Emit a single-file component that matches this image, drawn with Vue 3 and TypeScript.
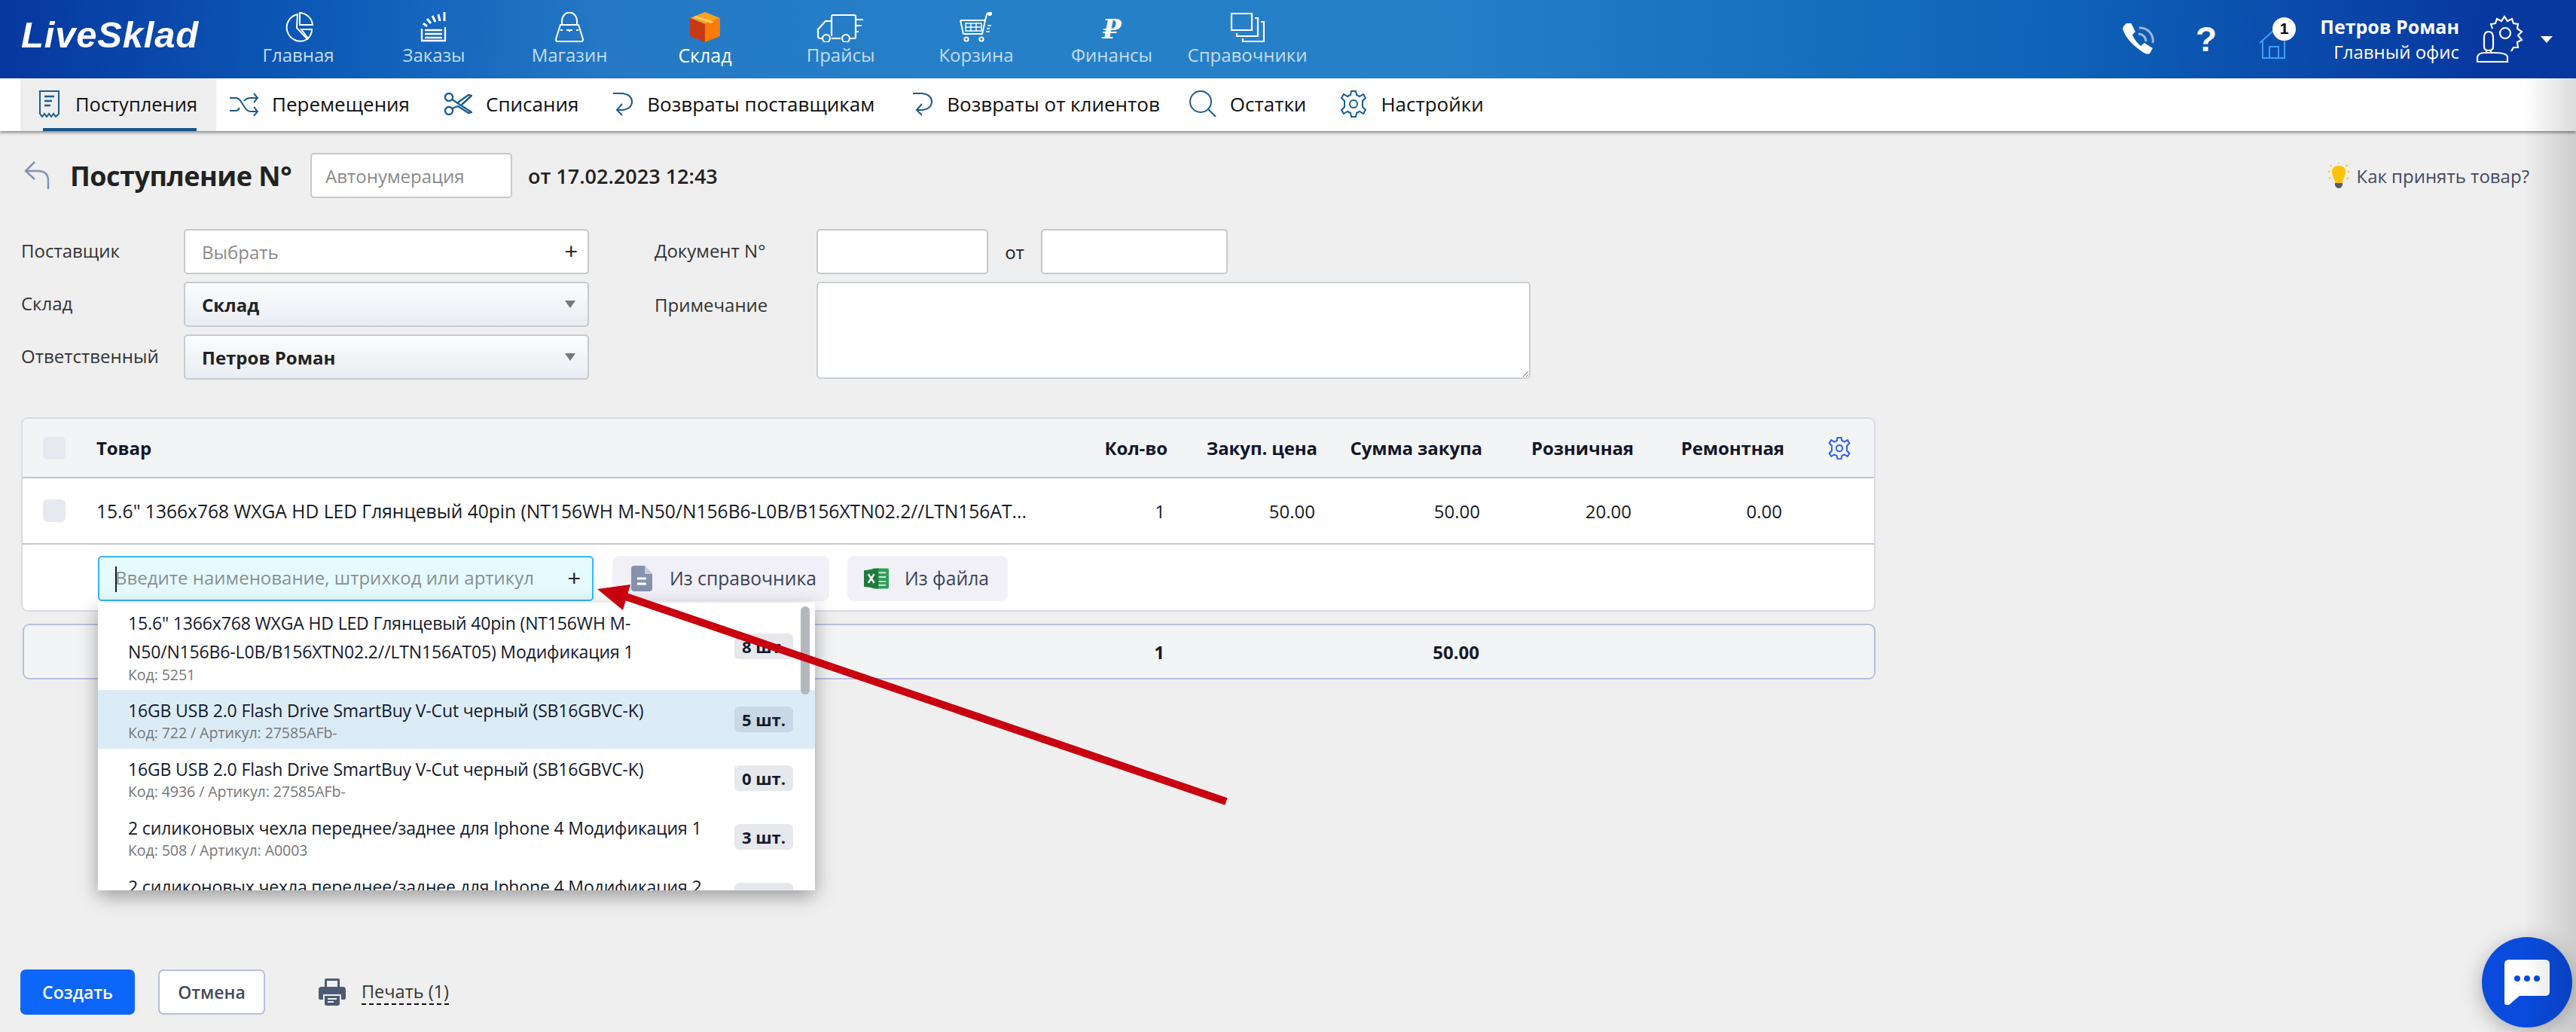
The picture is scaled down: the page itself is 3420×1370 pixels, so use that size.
<script setup lang="ts">
interface Suggestion { lines: string[]; meta: string; stock: string; active?: boolean }

const subnavReturn = ['Возвраты поставщикам', 'Возвраты от клиентов']

const suggestions: Suggestion[] = [
  { lines: ['15.6" 1366x768 WXGA HD LED Глянцевый 40pin (NT156WH M-', 'N50/N156B6-L0B/B156XTN02.2//LTN156AT05) Модификация 1'], meta: 'Код: 5251', stock: '8 шт.' },
  { lines: ['16GB USB 2.0 Flash Drive SmartBuy V-Cut черный (SB16GBVC-K)'], meta: 'Код: 722 / Артикул: 27585AFb-', stock: '5 шт.', active: true },
  { lines: ['16GB USB 2.0 Flash Drive SmartBuy V-Cut черный (SB16GBVC-K)'], meta: 'Код: 4936 / Артикул: 27585AFb-', stock: '0 шт.' },
  { lines: ['2 силиконовых чехла переднее/заднее для Iphone 4 Модификация 1'], meta: 'Код: 508 / Артикул: A0003', stock: '3 шт.' },
  { lines: ['2 силиконовых чехла переднее/заднее для Iphone 4 Модификация 2'], meta: 'Код: 509 / Артикул: A0004', stock: '1 шт.' }
]
</script>

<template>
  <div class="page">
    <header class="topbar">
      <div class="logo">LiveSklad</div>
      <nav class="mainnav">
        <a class="nav-item">
          <svg width="42" height="40" viewBox="0 0 42 40" fill="none" stroke="#fff" stroke-width="2"><path d="M20 3A18 18 0 1 0 33 36L19 21Z"/><path d="M23 1A18 18 0 0 1 40 17H23Z"/><path d="M25 23H39A18 18 0 0 1 34 35Z"/></svg>
          <span>Главная</span>
        </a>
        <a class="nav-item">
          <svg width="36" height="40" viewBox="0 0 36 40" fill="none" stroke="#fff" stroke-width="2.4"><path d="M2 22V38H33V20"/><path d="M6 24H29M6 29H29M6 34H29" stroke-width="2.6"/><path d="M9 19L4 15M14 15L9 9M20 13L16 5M26 12L24 3M32 12V0" stroke-width="3"/></svg>
          <span>Заказы</span>
        </a>
        <a class="nav-item">
          <svg width="40" height="40" viewBox="0 0 40 40" fill="none" stroke="#fff" stroke-width="2"><path d="M10 18V12A9.500 11 0 0 1 30 12V18"/><path d="M8 17H32L38 36Q38 39 36 39H4Q2 39 2 36Z"/><path d="M8 24H11M29 24H32M16 24H24M20 24V26"/></svg>
          <span>Магазин</span>
        </a>
        <a class="nav-item current">
          <svg width="40" height="40" viewBox="0 0 40 40"><path d="M20 0L40 8L20 16L0 8Z" fill="#f5a21e"/><path d="M0 8L20 16V40L0 32Z" fill="#c63a13"/><path d="M40 8L20 16V40L40 32Z" fill="#ff7a05"/><path d="M8 5L32 13L28 15L4 7Z" fill="#ffc95c"/></svg>
          <span>Склад</span>
        </a>
        <a class="nav-item">
          <svg width="64" height="40" viewBox="0 0 64 40" fill="none" stroke="#fff" stroke-width="2.2"><path d="M20 12H12L2 23V32Q2 35 5 35H8"/><path d="M20 32V6Q20 4 22 4H50Q52 4 52 6V33Q52 35 50 35H44"/><path d="M20 35H32"/><circle cx="13" cy="35" r="5"/><circle cx="39" cy="35" r="5"/><path d="M52 10H62M52 18H60M52 26H56"/></svg>
          <span>Прайсы</span>
        </a>
        <a class="nav-item">
          <svg width="44" height="40" viewBox="0 0 44 40" fill="none" stroke="#fff" stroke-width="2"><path d="M1 11H34L36 3Q37 1 40 1"/><path d="M1 11L5 29H30L34 11"/><path d="M8 15H29V25H8ZM15 14V26M22 14V26M8 20H29" stroke-width="1.400"/><circle cx="9" cy="36" r="2.600"/><circle cx="29" cy="36" r="2.600"/><circle cx="40" cy="2" r="2" fill="#fff"/><path d="M37 18H42M36 22H40M35 26H40" stroke-width="1.400"/></svg>
          <span>Корзина</span>
        </a>
        <a class="nav-item">
          <span class="ruble">₽</span>
          <span>Финансы</span>
        </a>
        <a class="nav-item">
          <svg width="46" height="40" viewBox="0 0 46 40" fill="none" stroke="#fff" stroke-width="2.2"><path d="M2 2H29V24H2Z"/><path d="M33 8H37V32H9V28"/><path d="M41 13H45V39H17V35"/></svg>
          <span>Справочники</span>
        </a>
      </nav>
      <div class="top-actions">
        <svg class="phone" width="42" height="42" viewBox="0 0 42 42" fill="none"><path d="M5 1L11 0L17 12L13 16Q16 24 24 31L29 27L40 34L36 41Q33 43 28 40Q5 25 0 8Q1 4 5 1Z" fill="#fff" transform="translate(0 -1)"/><path d="M22 6A17 17 0 0 1 40 26M21 14A10 10 0 0 1 31 24" stroke="#9db8dc" stroke-width="3"/></svg>
        <div class="question">?</div>
        <div class="home">
          <svg width="36" height="38" viewBox="0 0 36 38" fill="none" stroke="#3c9fff" stroke-width="2"><path d="M1 17L19 1M5 14V37H34V6"/><path d="M14 37V22H26V37"/></svg>
          <span class="home-badge">1</span>
        </div>
        <div class="user">
          <div class="user-name">Петров Роман</div>
          <div class="user-office">Главный офис</div>
        </div>
        <svg class="avatar" width="64" height="64" viewBox="0 0 64 64" fill="none" stroke="#fff" stroke-width="2.200"><path d="M22 18L20 12L26 11L28 5L34 8L38 2L42 8L48 5L50 11L56 12L55 18L61 22L56 27L61 33L55 36L56 43L50 43L47 48"/><circle cx="39" cy="24" r="7"/><path d="M11 30Q11 22 17 22Q23 22 23 30V42Q23 47 17 47Q11 47 11 42Z"/><path d="M14 47V50H20V47"/><path d="M2 62V56Q3 50 12 50H24Q42 50 42 56V62Z"/></svg>
        <span class="caret"></span>
      </div>
    </header>

    <nav class="subnav">
      <a class="sub-item active">
        <svg width="29" height="36" viewBox="0 0 29 36" fill="none" stroke="#1b5c8f" stroke-width="2"><path d="M2 1H27V31L23 35L20 31L17 35L14 31L11 35L8 31L5 35L2 31Z"/><path d="M8 8H21M8 14H18M8 20H16" stroke-width="2.500"/></svg>
        <span>Поступления</span>
      </a>
      <a class="sub-item">
        <svg width="38" height="32" viewBox="0 0 38 32" fill="none" stroke="#1b5c8f" stroke-width="2"><path d="M0 8H8Q12 8 15 13L21 22Q24 26 28 26H37M0 25H8Q11 25 13 21M19 12Q22 8 28 8H37"/><path d="M32 2L37 8L32 14M32 20L37 26L32 32"/></svg>
        <span>Перемещения</span>
      </a>
      <a class="sub-item">
        <svg width="38" height="32" viewBox="0 0 38 32" fill="none" stroke="#1b5c8f" stroke-width="2.400"><circle cx="7" cy="7" r="5"/><circle cx="7" cy="25" r="5"/><path d="M11 10L37 27L33 28L19 19L11 22M19 14L33 4L37 5L24 17"/></svg>
        <span>Списания</span>
      </a>
      <a class="sub-item" v-for="label in subnavReturn" :key="label">
        <svg width="28" height="32" viewBox="0 0 28 32" fill="none" stroke="#1b5c8f" stroke-width="2"><path d="M1 2H14Q26 4 26 13Q26 22 14 24H7"/><path d="M13 16L6 24L13 31"/></svg>
        <span>{{ label }}</span>
      </a>
      <a class="sub-item">
        <svg width="36" height="36" viewBox="0 0 36 36" fill="none" stroke="#1b5c8f" stroke-width="2"><circle cx="15" cy="15" r="14"/><path d="M25 25L35 35"/></svg>
        <span>Остатки</span>
      </a>
      <a class="sub-item">
        <svg width="36" height="36" viewBox="0 0 36 36" fill="none" stroke="#1b5c8f" stroke-width="2"><path d="M15 1H21L22 6L26 8L31 5L34 10L30 14V18V22L34 26L31 31L26 28L22 30L21 35H15L14 30L10 28L5 31L2 26L6 22V14L2 10L5 5L10 8L14 6Z"/><circle cx="18" cy="18" r="5"/></svg>
        <span>Настройки</span>
      </a>
    </nav>

    <main class="content">
      <div class="title-row">
        <svg class="back" width="34" height="38" viewBox="0 0 34 38" fill="none" stroke="#7f93b4" stroke-width="2.500"><path d="M14 1L2 13L14 24"/><path d="M2 13H20Q32 14 32 26V37"/></svg>
        <h1>Поступление N°</h1>
        <input class="field autonum" placeholder="Автонумерация" />
        <span class="doc-date">от 17.02.2023 12:43</span>
        <a class="hint">
          <svg width="30" height="34" viewBox="0 0 30 34"><path d="M15 4Q25 4 24 14Q23 19 20 24V27H10V24Q7 19 6 14Q5 4 15 4Z" fill="#ffc107"/><path d="M10 27H20V30Q18 34 15 34Q12 34 10 30Z" fill="#555a66"/><path d="M1 12H3M27 12H29M4 3L5 5M26 3L25 5M15 0V1M2 21L4 20M28 21L26 20" stroke="#ffc107" stroke-width="2"/></svg>
          <span>Как принять товар?</span>
        </a>
      </div>

      <section class="form">
        <div class="form-left">
          <label class="f-label">Поставщик</label>
          <div class="combo">
            <input class="field combo-input" placeholder="Выбрать" />
            <span class="plus">+</span>
          </div>
          <label class="f-label">Склад</label>
          <div class="select"><span>Склад</span><i class="sel-caret"></i></div>
          <label class="f-label">Ответственный</label>
          <div class="select"><span>Петров Роман</span><i class="sel-caret"></i></div>
        </div>
        <div class="form-right">
          <label class="f-label">Документ N°</label>
          <div class="doc-row">
            <input class="field doc-num" />
            <span class="doc-from">от</span>
            <input class="field doc-day" />
          </div>
          <label class="f-label note-label">Примечание</label>
          <textarea class="note"></textarea>
        </div>
      </section>

      <section class="table">
        <div class="grid-row head">
          <span class="check"></span>
          <span class="name">Товар</span>
          <span class="num">Кол-во</span>
          <span class="num">Закуп. цена</span>
          <span class="num">Сумма закупа</span>
          <span class="num">Розничная</span>
          <span class="num">Ремонтная</span>
          <svg class="cog" width="30" height="30" viewBox="0 0 36 36" fill="none" stroke="#3366e6" stroke-width="2.500"><path d="M15 1H21L22 6L26 8L31 5L34 10L30 14V22L34 26L31 31L26 28L22 30L21 35H15L14 30L10 28L5 31L2 26L6 22V14L2 10L5 5L10 8L14 6Z"/><circle cx="18" cy="18" r="5"/></svg>
        </div>
        <div class="grid-row body">
          <span class="check"></span>
          <span class="name row-name">15.6" 1366x768 WXGA HD LED Глянцевый 40pin (NT156WH M-N50/N156B6-L0B/B156XTN02.2//LTN156AT...</span>
          <span class="num val">1</span>
          <span class="num val">50.00</span>
          <span class="num val">50.00</span>
          <span class="num val">20.00</span>
          <span class="num val">0.00</span>
        </div>
        <div class="add-row">
          <div class="search">
            <i class="cursor"></i>
            <input class="search-input" placeholder="Введите наименование, штрихкод или артикул" />
            <span class="plus">+</span>
            <div class="dropdown">
              <div class="sug" :class="{ active: s.active }" v-for="(s, i) in suggestions" :key="i">
                <div class="sug-text">
                  <div class="sug-title" v-for="line in s.lines" :key="line">{{ line }}</div>
                  <div class="sug-meta">{{ s.meta }}</div>
                </div>
                <span class="stock">{{ s.stock }}</span>
              </div>
              <i class="scrollbar"></i>
            </div>
          </div>
          <a class="soft-btn catalog">
            <svg width="28" height="34" viewBox="0 0 28 34"><path d="M4 0H18L28 11V30Q28 34 24 34H4Q0 34 0 30V4Q0 0 4 0Z" fill="#8592ad"/><path d="M18 0L28 11H18Z" fill="#c5cbd8"/><path d="M8 17H20M8 24H20" stroke="#fff" stroke-width="3"/></svg>
            <span>Из справочника</span>
          </a>
          <a class="soft-btn from-file">
            <svg width="33" height="32" viewBox="0 0 34 32"><path d="M12 2H32Q34 2 34 4V28Q34 30 32 30H12Z" fill="#2f9e57"/><path d="M18 8H30M18 14H30M18 20H30M18 25H30" stroke="#cdebd7" stroke-width="2"/><path d="M0 5L20 2V30L0 27Z" fill="#1e7a3f"/><path d="M6 10L14 22M14 10L6 22" stroke="#fff" stroke-width="2.600"/></svg>
            <span>Из файла</span>
          </a>
        </div>
      </section>

      <section class="totals">
        <span></span>
        <span></span>
        <span class="num total">1</span>
        <span></span>
        <span class="num total">50.00</span>
      </section>

      <footer class="actions">
        <button class="btn primary">Создать</button>
        <button class="btn outline">Отмена</button>
        <a class="print">
          <svg width="36" height="36" viewBox="0 0 36 36"><path d="M8 12V2Q8 0 10 0H26Q28 0 28 2V12H25V3H11V12Z" fill="#4d5a73"/><path d="M4 11H32Q36 11 36 15V26Q36 28 33 28H30V21H6V28H3Q0 28 0 26V15Q0 11 4 11Z" fill="#4d5a73"/><path d="M8 23H28V33Q28 36 25 36H11Q8 36 8 33Z" fill="#4d5a73"/><path d="M12 27H24M12 31H20" stroke="#eee" stroke-width="2"/></svg>
          <span class="print-label">Печать (1)</span>
        </a>
      </footer>
    </main>

    <div class="chat">
      <svg width="60" height="60" viewBox="0 0 60 60"><path d="M6 0H54Q60 0 60 6V42Q60 48 54 48H20L6 60Q0 62 0 56V6Q0 0 6 0Z" fill="#fff"/><circle cx="17" cy="25" r="4" fill="#0a4bdd"/><circle cx="30" cy="25" r="4" fill="#0a4bdd"/><circle cx="43" cy="25" r="4" fill="#0a4bdd"/></svg>
    </div>
    <div class="edge-shade"></div>

    <svg class="pointer" width="3420" height="1370" viewBox="0 0 3420 1370">
      <path d="M1628 1064L825 790" stroke="#c8000f" stroke-width="10"/>
      <path d="M793 782L837 776L827 810Z" fill="#c8000f"/>
    </svg>
  </div>
</template>

<style>
html, body { margin: 0; background: #efefef; }
</style>

<style scoped>
.page {
  position: relative;
  width: 3420px;
  height: 1370px;
  overflow: hidden;
  display: flex;
  flex-direction: column;
  background: #efefef;
  color: #171a24;
  font-family: "Open Sans", "Noto Sans", sans-serif;
  font-size: 24px;
}
.topbar {
  height: 104px;
  flex: none;
  display: flex;
  align-items: stretch;
  background: linear-gradient(92deg, #07379f 0, #0d5cb8 450px, #2478c5 800px, #2680c8 1300px, #2680c8 1900px, #0e62b8 2750px, #0738a0 3300px);
}
.logo {
  width: 306px;
  box-sizing: border-box;
  padding: 16px 0 0 28px;
  color: #fff;
  font: italic 700 49px/60px "Liberation Sans", sans-serif;
  letter-spacing: 0.8px;
}
.mainnav { display: flex; }
.nav-item {
  width: 180px;
  display: flex;
  flex-direction: column;
  align-items: center;
  padding-top: 16px;
  box-sizing: border-box;
  color: #c3dcf0;
  font-size: 24px;
  line-height: 34px;
}
.nav-item svg { height: 40px; display: block; }
.nav-item.current { color: #fff; font-weight: 500; font-size: 25px; }
.ruble {
  height: 40px;
  font: italic 700 36px/44px "DejaVu Serif", serif;
  color: #fff;
}
.top-actions { margin-left: auto; display: flex; align-items: center; padding-right: 31px; }
.phone { margin-right: 55px; }
.question {
  width: 28px;
  margin-right: 56px;
  font: 700 46px/46px "Liberation Sans", sans-serif;
  color: #fff;
  text-align: center;
}
.home { position: relative; width: 36px; height: 38px; margin-right: 40px; margin-top: 14px; }
.home svg { display: block; }
.home-badge {
  position: absolute;
  left: 18px;
  top: -17px;
  width: 31px;
  height: 31px;
  border-radius: 50%;
  background: #fff;
  color: #000;
  font: 700 21px/29px "Liberation Sans", sans-serif;
  text-align: center;
}
.user { text-align: right; color: #fff; width: 190px; margin-right: 22px; }
.user-name { font-weight: 700; font-size: 25px; line-height: 34px; white-space: nowrap; }
.user-office { font-size: 24px; line-height: 34px; white-space: nowrap; }
.avatar { margin-right: 22px; }
.caret { width: 0; height: 0; border: 8px solid transparent; border-top: 9px solid #fff; border-bottom: 0; }

.subnav {
  height: 70px;
  flex: none;
  display: flex;
  padding-left: 27px;
  background: #fff;
  box-shadow: 0 2px 4px rgba(0, 0, 0, 0.45);
  position: relative;
  color: #111;
}
.sub-item {
  display: flex;
  align-items: center;
  gap: 18px;
  margin-right: 45px;
  padding-bottom: 3px;
  box-sizing: border-box;
  font-size: 26px;
  white-space: nowrap;
}
.sub-item:nth-child(4) { margin-right: 50px; }
.sub-item:nth-child(5) { margin-right: 39px; }
.sub-item svg { flex: none; }
.sub-item.active {
  width: 260px;
  padding-left: 24px;
  margin-right: 18px;
  gap: 20px;
  background: #eeeeee;
  position: relative;
  font-size: 25.5px;
}
.sub-item.active::after {
  content: "";
  position: absolute;
  left: 30px;
  right: 26px;
  bottom: 0;
  height: 4px;
  background: #16558c;
}

.content { flex: 1; display: flex; flex-direction: column; padding: 29px 0 23px 27px; min-height: 0; }
.title-row { display: flex; align-items: center; height: 60px; padding-right: 62px; }
.back { margin: 0 27px 0 5px; flex: none; }
h1 { margin: 0 21px 0 0; font-size: 36px; font-weight: 700; color: #222; white-space: nowrap; width: 298px; letter-spacing: -0.5px; }
.field {
  box-sizing: border-box;
  height: 60px;
  background: #fff;
  border: 2px solid #c6c8c9;
  border-radius: 5px;
  outline: none;
  font: inherit;
  padding: 0 20px;
}
.field::placeholder { color: #8a8a8a; opacity: 1; }
.autonum { width: 268px; padding-left: 18px; }
.doc-date { margin-left: 21px; font-size: 27px; font-weight: 600; color: #222; }
.hint { margin-left: auto; display: flex; align-items: center; gap: 9px; color: #444a60; font-size: 24px; }

.form { display: flex; margin-top: 41px; }
.form-left {
  display: grid;
  grid-template-columns: 217px 538px;
  grid-auto-rows: 60px;
  row-gap: 10px;
  width: 841px;
  align-items: center;
}
.f-label { color: #333; font-size: 24px; padding-left: 1px; padding-bottom: 3px; }
.combo { position: relative; width: 538px; height: 60px; }
.combo-input { width: 100%; padding-left: 22px; }
.plus {
  position: absolute;
  right: 15px;
  top: 50%;
  transform: translateY(-50%);
  font: 400 30px/30px "Liberation Sans", sans-serif;
  color: #222;
}
.select {
  box-sizing: border-box;
  height: 60px;
  display: flex;
  align-items: center;
  justify-content: space-between;
  padding: 0 16px 0 22px;
  border: 2px solid #c6cbd0;
  border-radius: 5px;
  background: linear-gradient(#fbfcfd, #e9edf2);
  font-weight: 700;
  color: #222;
}
.sel-caret { border: 7px solid transparent; border-top: 10px solid #777; border-bottom: 0; }
.form-right {
  display: grid;
  grid-template-columns: 216px 948px;
  grid-template-rows: 60px 129px;
  row-gap: 10px;
}
.form-right .f-label { align-self: center; }
.form-right .note-label { align-self: start; padding-top: 14px; }
.doc-row { display: flex; align-items: center; }
.doc-num { width: 228px; }
.doc-from { width: 70px; text-align: center; color: #222; }
.doc-day { width: 248px; }
.note {
  box-sizing: border-box;
  width: 948px;
  height: 129px;
  background: #fff;
  border: 2px solid #c8cfd4;
  border-radius: 5px;
  outline: none;
  resize: both;
  font: inherit;
}

.table {
  box-sizing: border-box;
  width: 2462px;
  margin-top: 50px;
  margin-left: 1px;
  background: #fff;
  border: 2px solid #d8dbe6;
  border-radius: 9px;
}
.grid-row {
  display: grid;
  grid-template-columns: 98px 1322px 100px 199px 219px 201px 200px 1fr;
  align-items: center;
}
.grid-row.head {
  height: 79px;
  box-sizing: border-box;
  background: #f3f4f6;
  border-bottom: 2px solid #bcc2cf;
  border-radius: 7px 7px 0 0;
  font-weight: 700;
  color: #12162a;
  letter-spacing: -0.1px;
}
.grid-row.body { height: 88px; box-sizing: border-box; border-bottom: 2px solid #c3c8d3; }
.check { width: 30px; height: 30px; margin-left: 27px; background: #e6e9f0; border-radius: 6px; }
.name { white-space: nowrap; min-width: 0; }
.row-name { font-size: 24.6px; }
.num { text-align: right; white-space: nowrap; }
.val { padding-right: 3px; }
.cog { margin-left: 58px; }

.add-row { height: 87px; display: flex; align-items: center; gap: 24px; padding-left: 100px; padding-top: 2px; box-sizing: border-box; }
.search {
  position: relative;
  box-sizing: border-box;
  width: 658px;
  height: 60px;
  background: #e6fbfd;
  border: 2px solid #38b6f5;
  border-radius: 5px;
  margin-right: 1px;
}
.search-input {
  box-sizing: border-box;
  width: 100%;
  height: 100%;
  padding: 0 60px 3px 21px;
  border: 0;
  outline: 0;
  background: transparent;
  font: inherit;
  font-size: 24px;
}
.search-input::placeholder { color: #8a8f92; opacity: 1; }
.cursor { position: absolute; left: 21px; top: 12px; width: 2px; height: 34px; background: #1a1a1a; }
.soft-btn {
  display: flex;
  align-items: center;
  height: 60px;
  border-radius: 9px;
  background: #f0f0f6;
  color: #3d4258;
  font-size: 24.7px;
  white-space: nowrap;
  box-sizing: border-box;
}
.catalog { width: 288px; padding-left: 25px; gap: 23px; }
.from-file { width: 213px; padding-left: 22px; gap: 21px; }
.dropdown {
  position: absolute;
  left: -2px;
  top: 60px;
  width: 952px;
  height: 382px;
  overflow: hidden;
  background: #fff;
  box-shadow: 0 8px 24px rgba(0, 0, 0, 0.35);
  z-index: 5;
}
.sug {
  box-sizing: border-box;
  display: flex;
  align-items: center;
  justify-content: space-between;
  height: 78px;
  padding: 0 29px 0 40px;
  color: #141a2e;
}
.sug:first-child { height: 116px; }
.sug.active { background: #dcecf7; }
.sug.active .stock { background: #c8d8e4; }
.sug-text { align-self: flex-start; padding-top: 12px; }
.sug:first-child .sug-text { padding-top: 8px; }
.sug-title { font-size: 23px; line-height: 30px; white-space: nowrap; letter-spacing: -0.15px; }
.sug:first-child .sug-title { line-height: 38px; }
.sug-meta { color: #777; font-size: 19.6px; line-height: 30px; letter-spacing: -0.1px; }
.sug:first-child .sug-meta { line-height: 24px; }
.stock {
  flex: none;
  width: 78px;
  height: 34px;
  border-radius: 6px;
  background: #e6e8ec;
  text-align: center;
  font-weight: 700;
  font-size: 22px;
  line-height: 34px;
}
.scrollbar {
  position: absolute;
  right: 7px;
  top: 5px;
  width: 12px;
  height: 117px;
  border-radius: 6px;
  background: #b4b8bc;
}

.totals {
  box-sizing: border-box;
  width: 2460px;
  height: 74px;
  margin-top: 16px;
  margin-left: 3px;
  display: grid;
  grid-template-columns: 98px 1320px 100px 199px 219px;
  align-items: center;
  background: #f3f4f6;
  border: 2px solid #b9bfdf;
  border-radius: 9px;
}
.total { font-weight: 700; padding-right: 4px; }

.actions { margin-top: auto; display: flex; align-items: center; }
.btn {
  box-sizing: border-box;
  height: 60px;
  border-radius: 7px;
  font: inherit;
  font-weight: 600;
  font-size: 23px;
}
.primary { width: 152px; background: #0d66fa; border: 0; color: #fff; }
.outline { width: 142px; margin-left: 31px; background: #fff; border: 2px solid #b9bedd; color: #444a5c; }
.print { display: flex; align-items: center; gap: 21px; margin-left: 71px; color: #333; font-size: 23.5px; }
.print-label { border-bottom: 2px dashed #111; line-height: 32px; }

.chat {
  position: absolute;
  left: 3295px;
  top: 1244px;
  width: 120px;
  height: 120px;
  border-radius: 50%;
  background: #0a4bdd;
  box-shadow: 0 6px 28px rgba(0, 0, 0, 0.28);
  display: flex;
  align-items: center;
  justify-content: center;
  z-index: 8;
}
.edge-shade {
  position: absolute;
  right: 0;
  top: 104px;
  bottom: 0;
  width: 70px;
  background: linear-gradient(90deg, rgba(0, 0, 0, 0), rgba(0, 0, 0, 0.14));
  pointer-events: none;
  z-index: 9;
}
.pointer { position: absolute; left: 0; top: 0; pointer-events: none; z-index: 10; }
</style>
